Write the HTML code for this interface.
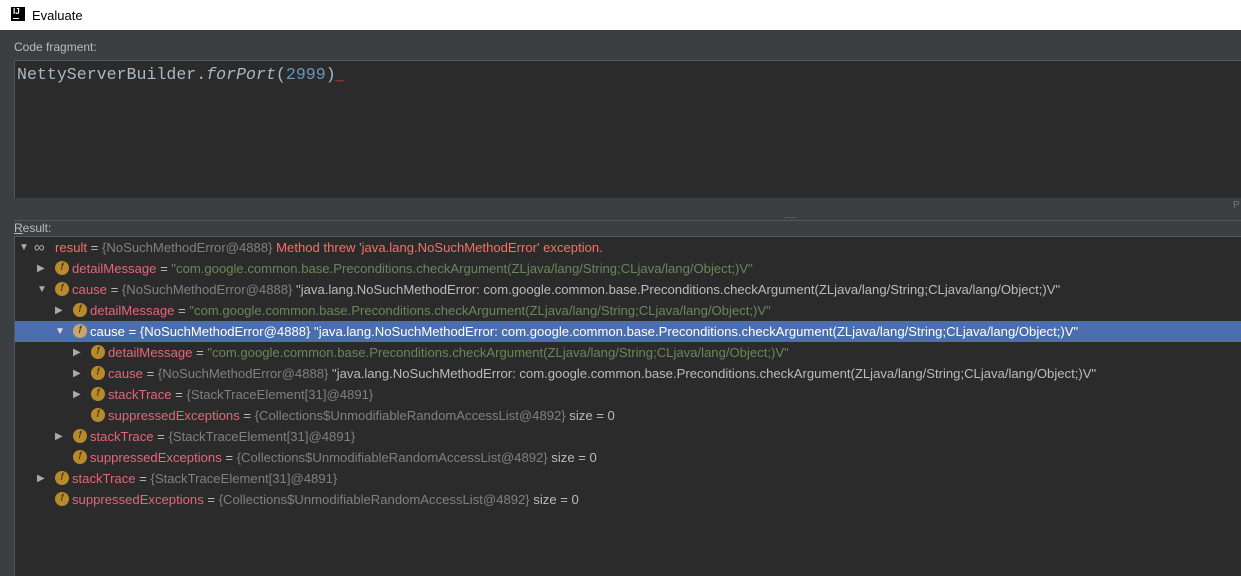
<!DOCTYPE html>
<html><head><style>
body{margin:0;width:1241px;height:575px;overflow:hidden;background:#3c3f41;font-family:"Liberation Sans",sans-serif;font-size:13px;position:relative}
.title{position:absolute;left:0;top:0;width:1241px;height:30px;background:#fff;color:#000;font-size:13px}
.title .ic{position:absolute;left:11px;top:7px;width:14px;height:14px;background:#000;color:#fff;font-size:8px;font-weight:bold;line-height:10px;padding-left:2px;box-sizing:border-box}
.title .ic:after{content:"";position:absolute;left:2px;bottom:2px;width:6px;height:1px;background:#fff}
.title span{position:absolute;left:32px;top:8px}
.lbl{position:absolute;color:#bbb;font-size:12px}
.editor{position:absolute;left:14px;top:60px;width:1227px;height:137px;background:#2b2b2b;border-top:1px solid #555;border-left:1px solid #555}
.code{position:absolute;left:2px;top:4px;font-family:"Liberation Mono",monospace;font-size:16.6px;color:#a9b7c6}
.tree{position:absolute;left:14px;top:236px;width:1227px;height:339px;background:#2b2b2b;border-top:1px solid #555;border-left:1px solid #555}
.row{position:absolute;left:0;width:1227px;height:21px;line-height:21px;white-space:nowrap;color:#bbb;font-size:13.1px}
.sel{background:#4b6eaf}
.arr{position:absolute;top:0;color:#aaa;font-size:10px}
.f{position:absolute;top:3px;width:14px;height:14px;border-radius:50%;background:#b88a2c;color:#3a2a08;font-size:10px;line-height:14px;text-align:center;font-style:italic}
.t{position:absolute;top:0}
.n{color:#e3677a}
.g{color:#808080}
.s{color:#6a8759}
.e{color:#ff6b68}
.sel .n,.sel .g{color:#fff}
</style></head><body>
<div class="title"><div class="ic">IJ</div><span>Evaluate</span></div>
<div class="lbl" style="left:14px;top:40px">Code fragment:</div>
<div class="editor"><div class="code">NettyServerBuilder.<i>forPort</i>(<span style="color:#6897bb">2999</span>)<span style="color:#b33;font-size:10px">‿</span></div></div>
<div style="position:absolute;left:785px;top:211px;color:#888;font-size:8px">.....</div>
<div style="position:absolute;left:1233px;top:200px;color:#777;font-size:10px">P</div>
<div style="position:absolute;left:14px;top:220px;width:1227px;height:1px;background:#555"></div>
<div class="lbl" style="left:14px;top:221px"><u>R</u>esult:</div>
<div class="tree">
<div class="row" style="top:0"><span class="arr" style="left:4px">▼</span><span class="t" style="left:19px;color:#aaa;font-size:15px">∞</span><span class="t" style="left:40px"><span class="n" style="color:#ff6b68">result</span> = <span class="g">{NoSuchMethodError@4888}</span> <span class="e">Method threw 'java.lang.NoSuchMethodError' exception.</span></span></div>
<div class="row" style="top:21px"><span class="arr" style="left:22px">▶</span><span class="f" style="left:40px">f</span><span class="t" style="left:57px"><span class="n">detailMessage</span> = <span class="s">"com.google.common.base.Preconditions.checkArgument(ZLjava/lang/String;CLjava/lang/Object;)V"</span></span></div>
<div class="row" style="top:42px"><span class="arr" style="left:22px">▼</span><span class="f" style="left:40px">f</span><span class="t" style="left:57px"><span class="n">cause</span> = <span class="g">{NoSuchMethodError@4888}</span> "java.lang.NoSuchMethodError: com.google.common.base.Preconditions.checkArgument(ZLjava/lang/String;CLjava/lang/Object;)V"</span></div>
<div class="row" style="top:63px"><span class="arr" style="left:40px">▶</span><span class="f" style="left:58px">f</span><span class="t" style="left:75px"><span class="n">detailMessage</span> = <span class="s">"com.google.common.base.Preconditions.checkArgument(ZLjava/lang/String;CLjava/lang/Object;)V"</span></span></div>
<div class="row sel" style="top:84px;color:#fff"><span class="arr" style="left:40px;color:#ddd">▼</span><span class="f" style="left:58px;background:#c9a56a">f</span><span class="t" style="left:75px"><span class="n">cause</span> = <span class="g">{NoSuchMethodError@4888}</span> "java.lang.NoSuchMethodError: com.google.common.base.Preconditions.checkArgument(ZLjava/lang/String;CLjava/lang/Object;)V"</span></div>
<div class="row" style="top:105px"><span class="arr" style="left:58px">▶</span><span class="f" style="left:76px">f</span><span class="t" style="left:93px"><span class="n">detailMessage</span> = <span class="s">"com.google.common.base.Preconditions.checkArgument(ZLjava/lang/String;CLjava/lang/Object;)V"</span></span></div>
<div class="row" style="top:126px"><span class="arr" style="left:58px">▶</span><span class="f" style="left:76px">f</span><span class="t" style="left:93px"><span class="n">cause</span> = <span class="g">{NoSuchMethodError@4888}</span> "java.lang.NoSuchMethodError: com.google.common.base.Preconditions.checkArgument(ZLjava/lang/String;CLjava/lang/Object;)V"</span></div>
<div class="row" style="top:147px"><span class="arr" style="left:58px">▶</span><span class="f" style="left:76px">f</span><span class="t" style="left:93px"><span class="n">stackTrace</span> = <span class="g">{StackTraceElement[31]@4891}</span></span></div>
<div class="row" style="top:168px"><span class="f" style="left:76px">f</span><span class="t" style="left:93px"><span class="n">suppressedExceptions</span> = <span class="g">{Collections$UnmodifiableRandomAccessList@4892}</span>  size = 0</span></div>
<div class="row" style="top:189px"><span class="arr" style="left:40px">▶</span><span class="f" style="left:58px">f</span><span class="t" style="left:75px"><span class="n">stackTrace</span> = <span class="g">{StackTraceElement[31]@4891}</span></span></div>
<div class="row" style="top:210px"><span class="f" style="left:58px">f</span><span class="t" style="left:75px"><span class="n">suppressedExceptions</span> = <span class="g">{Collections$UnmodifiableRandomAccessList@4892}</span>  size = 0</span></div>
<div class="row" style="top:231px"><span class="arr" style="left:22px">▶</span><span class="f" style="left:40px">f</span><span class="t" style="left:57px"><span class="n">stackTrace</span> = <span class="g">{StackTraceElement[31]@4891}</span></span></div>
<div class="row" style="top:252px"><span class="f" style="left:40px">f</span><span class="t" style="left:57px"><span class="n">suppressedExceptions</span> = <span class="g">{Collections$UnmodifiableRandomAccessList@4892}</span>  size = 0</span></div>
</div>
</body></html>
